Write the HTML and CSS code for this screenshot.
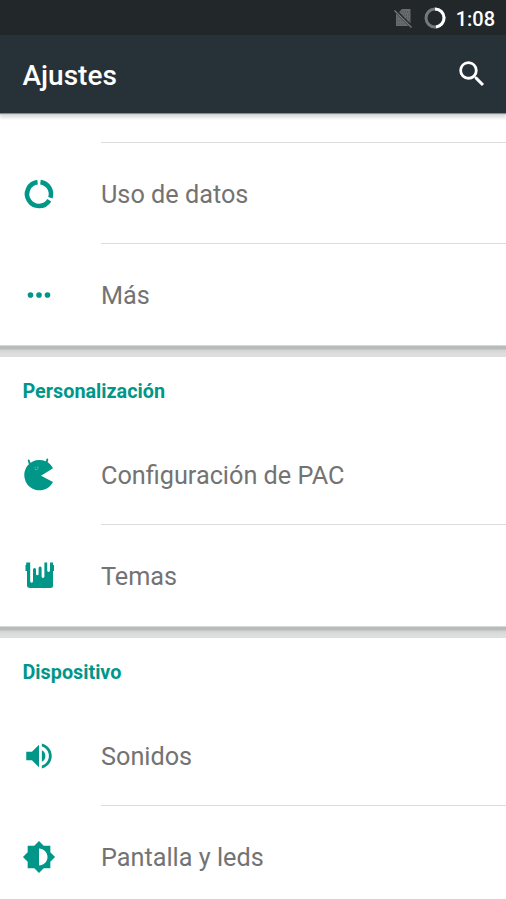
FILE: index.html
```html
<!DOCTYPE html>
<html lang="es">
<head>
<meta charset="utf-8">
<title>Ajustes</title>
<link rel="stylesheet" href="styles.css">
</head>
<body>
<div class="status">
  <svg class="sim" viewBox="0 0 20 20">
    <path fill="#686c6e" d="M9 1h8.500v14.500L6 4zM3 5.500L15.500 18H3z"/>
    <path d="M1.500 2.500l17 17" stroke="#777b7d" stroke-width="1.300"/>
    <path d="M8 4h9M9 7h8M11 10h6M14 13h3M4 10h2M4 13h5M4 16h8" stroke="#4b4f51" stroke-width="1" stroke-dasharray="1 1"/>
  </svg>
  <svg class="battery" viewBox="0 0 22 22">
    <circle cx="11" cy="11" r="9" fill="none" stroke="#76797b" stroke-width="3"/>
    <path d="M11 2a9 9 0 0 1 1 17.950" fill="none" stroke="#fff" stroke-width="3"/>
  </svg>
  <span class="clock">1:08</span>
</div>
<header class="appbar">
  <h1>Ajustes</h1>
  <svg class="icon" viewBox="0 0 24 24"><path d="M15.500 14h-.79l-.28-.27A6.471 6.471 0 0 0 16 9.500 6.500 6.500 0 1 0 9.500 16c1.610 0 3.090-.59 4.230-1.570l.27.280v.79l5 4.990L20.490 19l-4.990-5zm-6 0C7.010 14 5 11.990 5 9.500S7.010 5 9.500 5 14 7.010 14 9.500 11.990 14 9.500 14z"/></svg>
</header>
<main>
  <section class="card first">
    <div class="row stub"><div class="label"></div></div>
    <div class="row">
      <svg class="icon" viewBox="0 0 34 34"><path d="M18.460 5.100A12 12 0 0 1 28.400 20.700M27.300 23.200A12 12 0 1 1 15.540 5.100" fill="none" stroke="#009688" stroke-width="4.600"/></svg>
      <div class="label">Uso de datos</div>
    </div>
    <div class="row">
      <svg class="icon" viewBox="0 0 24 24"><circle cx="6" cy="12" r="2"/><circle cx="12" cy="12" r="2"/><circle cx="18" cy="12" r="2"/></svg>
      <div class="label">Más</div>
    </div>
  </section>
  <section class="card">
    <h2>Personalización</h2>
    <div class="row">
      <svg class="icon" viewBox="0 0 34 34">
        <path d="M31 10.200A15.200 15.200 0 1 0 31 24L19 17.800z"/>
        <path d="M8 6.500L6.700 2.500M24.300 5.500L25.300 1.500" fill="none" stroke="#009688" stroke-width="1.900" stroke-linecap="round"/>
        <path d="M13 9l.5 3 2-.5 1-2-2-.8" fill="none" stroke="#8cd0c9" stroke-width=".8" stroke-dasharray="1 1"/>
      </svg>
      <div class="label">Configuración de PAC</div>
    </div>
    <div class="row">
      <svg class="icon" viewBox="0 0 34 34"><path d="M4.200 3.500h4v18.800a1.400 1.400 0 0 0 2.800 0V10.500a1.500 1.500 0 0 1 3 0V15a1.300 1.300 0 0 0 2.600 0V9a1.500 1.500 0 0 1 3 0v8.500a1.400 1.400 0 0 0 2.800 0V3.500h2.800v8a1.400 1.400 0 0 0 2.800 0v-8h3V6h1v6h-1v14.500q0 2.500-2.500 2.500h-20Q5 29 5 26.500V12H3.500V6h.7z"/></svg>
      <div class="label">Temas</div>
    </div>
  </section>
  <section class="card">
    <h2>Dispositivo</h2>
    <div class="row">
      <svg class="icon" viewBox="0 0 24 24"><path d="M3 9v6h4l5 5V4L7 9H3zm13.500 3A4.500 4.500 0 0 0 14 7.970v8.050A4.470 4.470 0 0 0 16.500 12zM14 3.230v2.060c2.890.86 5 3.540 5 6.710s-2.110 5.850-5 6.710v2.060c4.010-.91 7-4.490 7-8.770s-2.990-7.860-7-8.770z"/></svg>
      <div class="label">Sonidos</div>
    </div>
    <div class="row">
      <svg class="icon" viewBox="0 0 24 24"><path d="M20 15.310L23.310 12 20 8.690V4h-4.690L12 .69 8.690 4H4v4.690L.69 12 4 15.310V20h4.690L12 23.310 15.310 20H20v-4.690zM12 18V6c3.310 0 6 2.690 6 6s-2.690 6-6 6z"/></svg>
      <div class="label">Pantalla y leds</div>
    </div>
  </section>
</main>
</body>
</html>
```
FILE: styles.css
```css
* { box-sizing: border-box; }
body {
  margin: 0;
  height: 899px;
  overflow: hidden;
  background: #dededd;
  font-family: Roboto, "Liberation Sans", sans-serif;
}
.status {
  height: 35px;
  display: flex;
  align-items: center;
  justify-content: flex-end;
  padding-right: 11px;
  background: #22272a;
  color: #fff;
}
.sim { width: 20px; height: 20px; margin-right: 11px; }
.battery { width: 22px; height: 22px; margin-right: 10px; }
.clock { font-size: 20px; font-weight: 500; line-height: 35px; padding-top: 3px; }
.appbar {
  position: relative;
  height: 78px;
  display: flex;
  align-items: center;
  justify-content: space-between;
  padding: 0 17px 0 22.5px;
  background: #273238;
  color: #fff;
  box-shadow: 0 1px 0 #858b8e, 0 2px 0 #cfd0d0, 0 5px 3px rgba(0, 0, 0, .13);
}
h1 { margin: 3px 0 0; font-size: 28px; font-weight: 500; line-height: 34px; }
.icon { width: 34px; height: 34px; flex: none; fill: #009688; }
.appbar .icon { fill: #fff; }
.card {
  margin-bottom: 12px;
  background: #fff;
  box-shadow: 0 1px 0 #d6d7d6, 0 4px 0 #b9bbba, 0 5px 0 #c5c8c8, 0 7px 2px #d3d4d4;
}
h2 {
  margin: 0;
  height: 67px;
  padding-left: 22.5px;
  color: #009688;
  font-size: 19.8px;
  font-weight: 700;
  line-height: 70px;
}
.row {
  height: 101px;
  display: flex;
  align-items: center;
  padding-left: 22.4px;
}
.label {
  flex: 1;
  height: 101px;
  margin-left: 44.6px;
  border-bottom: 1px solid #dcdcdc;
  color: #737373;
  font-size: 25.25px;
  line-height: 103px;
}
.row:last-child .label { border-bottom: 0; }
.stub, .stub .label { height: 30px; }
.stub .label { margin-left: 78.6px; }
```
